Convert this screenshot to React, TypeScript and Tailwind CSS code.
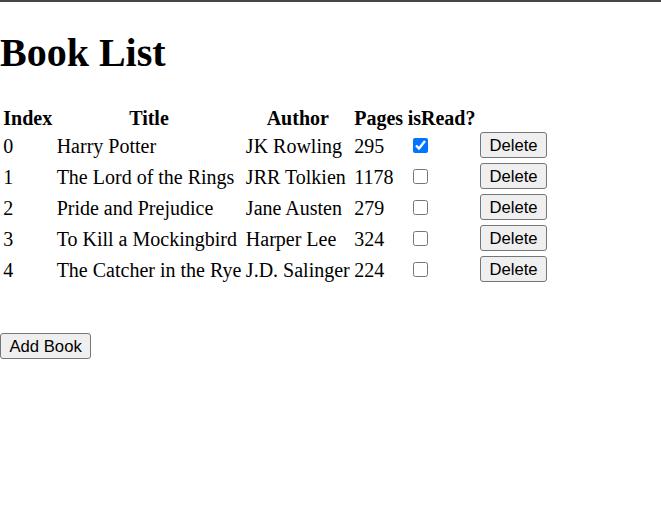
import React from "react";

const books = [
  { title: "Harry Potter", author: "JK Rowling", pages: 295, read: true },
  { title: "The Lord of the Rings", author: "JRR Tolkien", pages: 1178, read: false },
  { title: "Pride and Prejudice", author: "Jane Austen", pages: 279, read: false },
  { title: "To Kill a Mockingbird", author: "Harper Lee", pages: 324, read: false },
  { title: "The Catcher in the Rye", author: "J.D. Salinger", pages: 224, read: false },
];

const btn =
  "h-[26px] px-[8.5px] py-0 border border-[#767676] rounded-[3px] bg-[#efefef] text-black text-[16.67px] leading-[19px] font-['Liberation_Sans',Arial,sans-serif]";

const cell = "px-[1.25px] pt-[1.25px] pb-[1.25px] text-left align-top whitespace-nowrap";

export default function App() {
  return (
    <div className="min-h-[523px] bg-white text-black font-['Liberation_Serif','Times_New_Roman',serif] text-[20px] leading-[23px]">
      <div className="h-[2px] bg-[#474747]" />
      <h1 className="text-[40px] leading-[46px] font-bold mt-[28px] mb-[28px]">Book List</h1>
      <table className="border-separate border-spacing-[2.5px]">
        <thead>
          <tr>
            <th className="p-[1.25px] font-bold text-center">Index</th>
            <th className="p-[1.25px] font-bold text-center">Title</th>
            <th className="p-[1.25px] font-bold text-center">Author</th>
            <th className="p-[1.25px] font-bold text-center">Pages</th>
            <th className="p-[1.25px] font-bold text-center">isRead?</th>
            <th className="p-[1.25px]"></th>
          </tr>
        </thead>
        <tbody>
          {books.map((b, i) => (
            <tr key={i} className="h-[29px]">
              <td className={cell}>{i}</td>
              <td className={cell}>{b.title}</td>
              <td className={cell}>{b.author}</td>
              <td className={cell}>{b.pages}</td>
              <td className="p-[1.25px] text-left align-middle">
                <input
                  type="checkbox"
                  readOnly
                  defaultChecked={b.read}
                  className="block w-[15px] h-[15px] ml-[5px] mb-[6px]"
                />
              </td>
              <td className="p-[1.25px] text-left align-middle">
                <button className={`${btn} block -translate-y-[3px]`}>Delete</button>
              </td>
            </tr>
          ))}
        </tbody>
      </table>
      <div className="mt-[44.5px]">
        <button className={btn}>Add Book</button>
      </div>
    </div>
  );
}
